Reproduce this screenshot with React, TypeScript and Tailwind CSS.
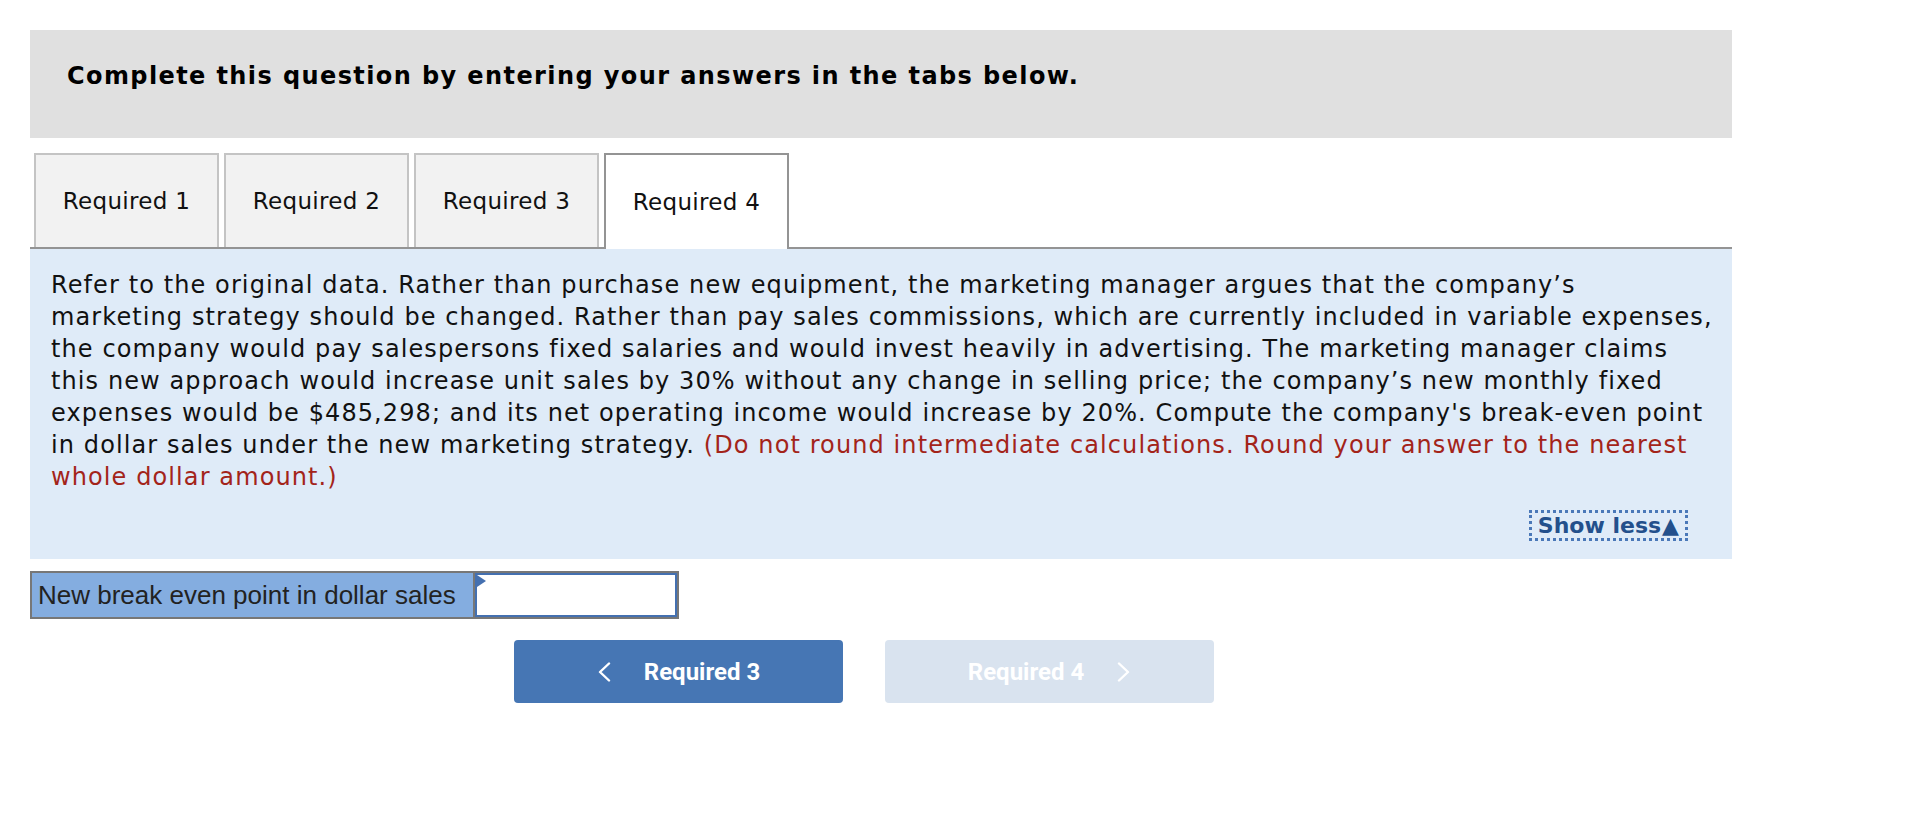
const tabs = ["Required 1", "Required 2", "Required 3", "Required 4"];
const active = 3;

const lines = [
  "Refer to the original data. Rather than purchase new equipment, the marketing manager argues that the company’s",
  "marketing strategy should be changed. Rather than pay sales commissions, which are currently included in variable expenses,",
  "the company would pay salespersons fixed salaries and would invest heavily in advertising. The marketing manager claims",
  "this new approach would increase unit sales by 30% without any change in selling price; the company’s new monthly fixed",
  "expenses would be $485,298; and its net operating income would increase by 20%. Compute the company's break-even point",
];

function Chevron({ dir }: { dir: "left" | "right" }) {
  return (
    <svg width="14" height="20" viewBox="0 0 14 20" fill="none" stroke="currentColor" strokeWidth="2.4" strokeLinecap="round" strokeLinejoin="round">
      {dir === "left" ? <path d="M12 1.5 L3 10 L12 18.5" /> : <path d="M2 1.5 L11 10 L2 18.5" />}
    </svg>
  );
}

export default function App() {
  return (
    <div className="bg-white min-h-[824px] pt-[30px] pl-[30px] font-['DejaVu_Sans',Verdana,sans-serif] text-[#111]">
      <div className="w-[1702px]">
        <div className="h-[108px] bg-[#e0e0e0] flex items-center pl-[37px] pb-[16px]">
          <h1 className="text-[24px] font-bold tracking-[1.4px] text-black">
            Complete this question by entering your answers in the tabs below.
          </h1>
        </div>

        <div className="mt-[15px] flex items-end gap-[5px] pl-[4px] border-b-2 border-[#949494]">
          {tabs.map((t, i) =>
            i === active ? (
              <div
                key={t}
                className="w-[185px] h-[96px] -mb-[2px] bg-white border-2 border-b-0 border-[#949494] flex items-center justify-center text-[23px] tracking-[0.3px]"
              >
                {t}
              </div>
            ) : (
              <div
                key={t}
                className="w-[185px] h-[94px] bg-[#f2f2f2] border-2 border-b-0 border-[#c4c4c4] flex items-center justify-center text-[23px] tracking-[0.3px]"
              >
                {t}
              </div>
            )
          )}
        </div>

        <div className="bg-[#dfebf8] pt-[20px] pl-[21px] pr-[10px] pb-[18px]">
          <p className="text-[24px] leading-[32px] tracking-[1.1px]">
            {lines.map((l) => (
              <span key={l} className="block whitespace-nowrap">
                {l}
              </span>
            ))}
            <span className="block whitespace-nowrap">
              in dollar sales under the new marketing strategy.{" "}
              <span className="text-[#a3241a]">
                (Do not round intermediate calculations. Round your answer to the nearest
              </span>
            </span>
            <span className="block whitespace-nowrap text-[#a3241a]">whole dollar amount.)</span>
          </p>
          <div className="mt-[17px] flex justify-end pr-[34px]">
            <button className="h-[31px] px-[6px] border-[3px] border-dotted border-[#4a78b8] flex items-center text-[22px] font-bold text-[#23508c] leading-none">
              Show less<span className="text-[22px] ml-[1px]">▲</span>
            </button>
          </div>
        </div>

        <div className="mt-[12px] flex w-[649px] h-[48px] border-2 border-[#777]">
          <div className="w-[443px] bg-[#84ade0] border-r-2 border-[#777] flex items-center pl-[6px] font-['Liberation_Sans',Arial,sans-serif] text-[26px] text-[#222]">
            New break even point in dollar sales
          </div>
          <div className="relative flex-1 bg-white border-2 border-[#4470b0]">
            <span className="absolute left-0 top-0 w-0 h-0 border-y-[6px] border-y-transparent border-l-[9px] border-l-[#4470b0]" />
          </div>
        </div>

        <div className="mt-[21px] ml-[484px] flex gap-[42px] font-['Roboto',sans-serif]">
          <button className="w-[329px] h-[63px] rounded-[4px] bg-[#4676b4] text-white flex items-center justify-center gap-[33px] text-[24px] font-bold">
            <Chevron dir="left" />
            Required 3
          </button>
          <button className="w-[329px] h-[63px] rounded-[4px] bg-[#d9e3ef] text-white flex items-center justify-center gap-[33px] text-[24px] font-bold">
            Required 4
            <Chevron dir="right" />
          </button>
        </div>
      </div>
    </div>
  );
}
